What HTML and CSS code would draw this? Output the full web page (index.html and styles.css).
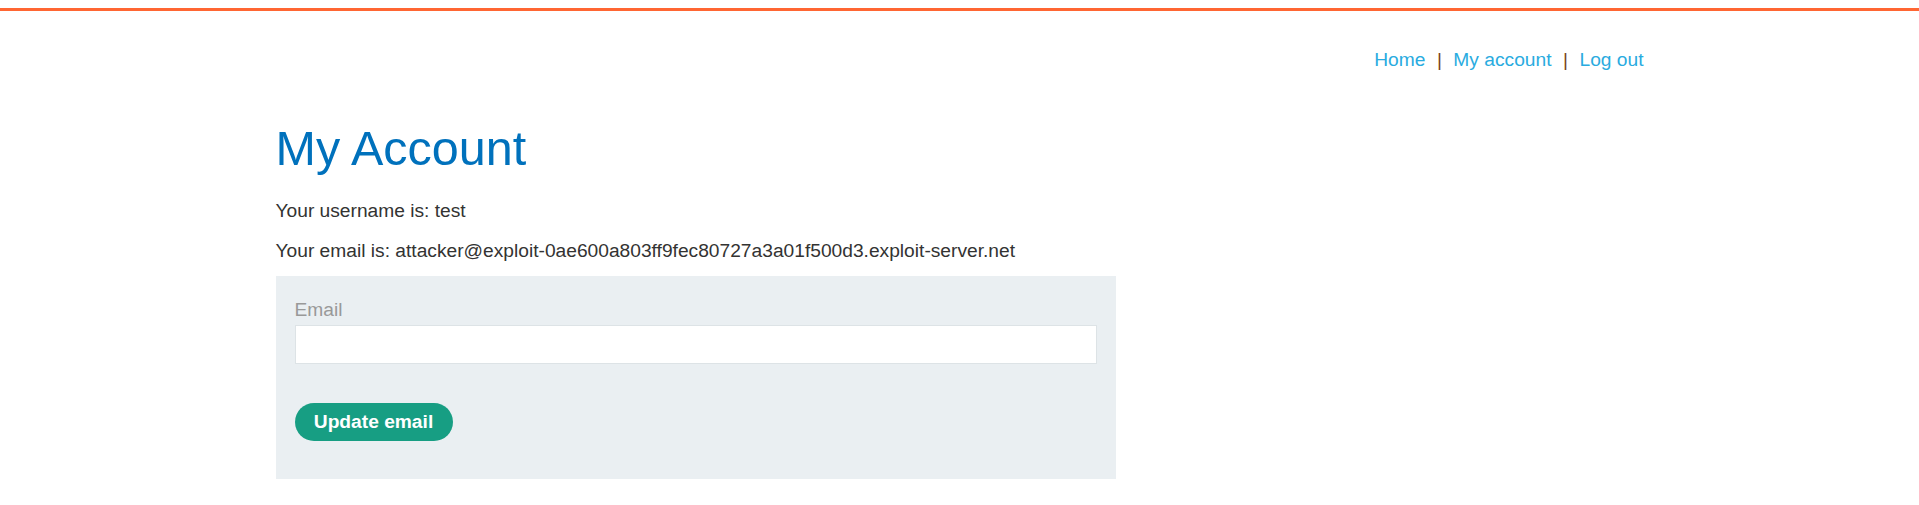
FILE: index.html
```html
<!DOCTYPE html>
<html lang="en">
<head>
<meta charset="utf-8">
<title>My Account</title>
<link rel="stylesheet" href="styles.css">
</head>
<body>
<div class="topline"></div>
<div class="container">
  <nav class="top-links">
    <a href="#">Home</a><span class="sep">|</span><a href="#">My account</a><span class="sep">|</span><a href="#">Log out</a>
  </nav>
  <h1 class="title">My Account</h1>
  <p class="info first">Your username is: test</p>
  <p class="info">Your email is: <span>attacker@exploit-0ae600a803ff9fec80727a3a01f500d3.exploit-server.net</span></p>
  <form class="email-form">
    <label class="label">Email</label>
    <input class="field" type="email" name="email">
    <button class="btn" type="button">Update email</button>
  </form>
</div>
</body>
</html>
```

FILE: styles.css
```css
html, body {
  margin: 0;
  padding: 0;
  background: #ffffff;
}

body {
  font-family: "Liberation Sans", Arial, Helvetica, sans-serif;
  font-size: 16px;
  color: #333332;
}

.topline {
  margin-top: 8px;
  height: 3px;
  background: #ff6633;
}

.container {
  width: 1368px;
  margin: 0 auto;
}

.top-links {
  display: flex;
  justify-content: flex-end;
  align-items: baseline;
  margin-top: 38px;
  font-size: 19.2px;
  line-height: 22px;
}

.top-links a {
  color: #29abe0;
  text-decoration: none;
}

.top-links .sep {
  color: #7a4520;
  margin: 0 11.5px;
}

.title {
  margin: 51px 0 0 0;
  font-size: 48.5px;
  line-height: 52px;
  font-weight: normal;
  color: #0071bc;
}

.info {
  margin: 16px 0 0 0;
  font-size: 19.2px;
  line-height: 24px;
}

.info.first {
  margin-top: 25px;
}

.email-form {
  display: flex;
  flex-direction: column;
  align-items: flex-start;
  width: 840px;
  box-sizing: border-box;
  margin-top: 13px;
  padding: 23px 19px 38px 19px;
  background: #eaeff2;
}

.label {
  font-size: 19.2px;
  line-height: 22px;
  color: #999999;
}

.field {
  margin: 4px 0 0 0;
  width: 802px;
  height: 39px;
  box-sizing: border-box;
  border: 1px solid #dde3e6;
  background: #ffffff;
  padding: 0 8px;
  font: inherit;
  outline: none;
}

.btn {
  margin-top: 39px;
  display: flex;
  align-items: center;
  justify-content: center;
  height: 38px;
  width: 158px;
  padding: 0;
  border: none;
  border-radius: 19px;
  background: #179e83;
  color: #ffffff;
  font-family: "Liberation Sans", Arial, Helvetica, sans-serif;
  font-size: 19.2px;
  font-weight: bold;
}
```
